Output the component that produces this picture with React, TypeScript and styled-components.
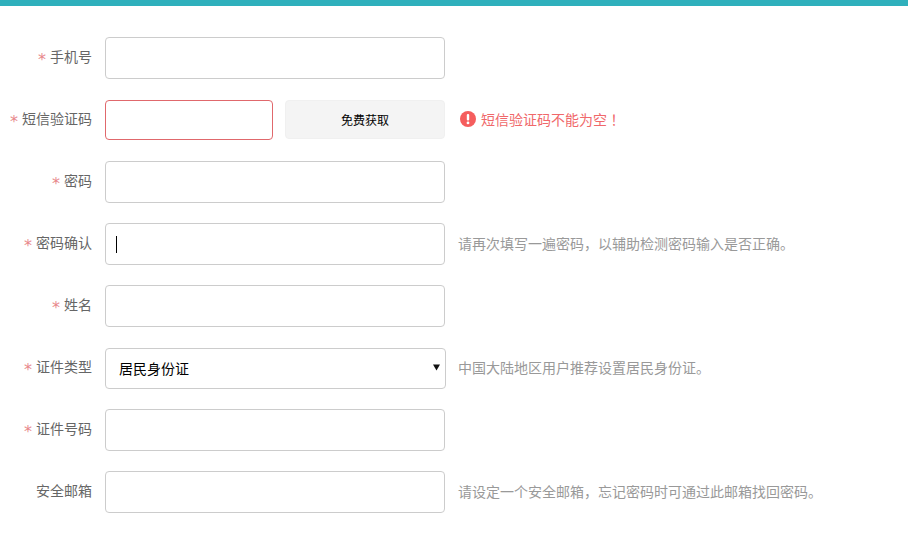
import React from 'react';
import styled, { createGlobalStyle, css } from 'styled-components';

const GlobalStyle = createGlobalStyle`
	html, body {
		margin: 0;
		padding: 0;
		background: #fff;
	}
	body {
		font-family: 'Liberation Sans', 'Noto Sans CJK SC', sans-serif;
		font-size: 14px;
		overflow: hidden;
	}
	* {
		box-sizing: border-box;
	}
`;

const TopBar = styled.div`
	height: 6px;
	background-color: #2fb0bc;
`;

const Form = styled.form`
	display: flex;
	flex-direction: column;
	gap: 20px;
	padding-top: 31px;
`;

const Row = styled.div`
	display: flex;
	align-items: center;
	height: 42px;
`;

const Label = styled.label`
	width: 92px;
	flex-shrink: 0;
	margin-right: 13px;
	margin-top: -3px;
	text-align: right;
	color: #666;
	line-height: 20px;
	white-space: nowrap;
`;

const Star = styled.span`
	font-family: 'DejaVu Sans', sans-serif;
	font-size: 16px;
	line-height: 0;
	color: #e8888b;
	margin-right: 4px;
	vertical-align: -3px;
`;

const Control = styled.div<{ $width?: number }>`
	position: relative;
	flex-shrink: 0;
	width: ${(props) => props.$width ?? 340}px;
`;

const fieldStyle = css`
	display: block;
	width: 100%;
	border: 1px solid #ccc;
	border-radius: 4px;
	background: #fff;
	outline: none;
	font-family: inherit;
`;

const TextInput = styled.input<{ $error?: boolean }>`
	${fieldStyle}
	height: ${(props) => (props.$error ? 40 : 42)}px;
	border-color: ${(props) => (props.$error ? '#e0686c' : '#ccc')};
`;

const SelectBox = styled.select`
	${fieldStyle}
	appearance: none;
	width: 341px;
	height: 41px;
	margin-top: 1px;
	padding: 0 13px 0;
	font-size: 14px;
	color: #000;
`;

const SelectArrow = styled.svg`
	position: absolute;
	top: 17px;
	right: 5px;
	width: 7px;
	height: 7px;
	pointer-events: none;
`;

const Caret = styled.span`
	position: absolute;
	left: 11px;
	top: 13px;
	width: 1px;
	height: 17px;
	background: #000;
`;

const CodeButton = styled.button`
	width: 160px;
	height: 39px;
	margin-left: 12px;
	margin-top: -1px;
	flex-shrink: 0;
	border: 1px solid #f0f0f0;
	border-radius: 4px;
	background: #f4f4f4;
	color: #000;
	font-family: inherit;
	font-size: 12px;
`;

const Hint = styled.span`
	margin-left: 13px;
	margin-top: -3px;
	color: #999;
	white-space: nowrap;
`;

const ErrorText = styled.span`
	display: flex;
	align-items: center;
	gap: 5px;
	margin-left: 15px;
	margin-top: -2px;
	color: #f0686a;
	white-space: nowrap;
`;

const Bang = styled.span`
	font-family: 'Noto Sans CJK TC', sans-serif;
`;

const ErrorIcon = () => (
	<svg width="16" height="16" viewBox="0 0 16 16">
		<circle cx="8" cy="8" r="8" fill="#f55d5d" />
		<rect x="6.8" y="3" width="2.4" height="6.6" rx="1" fill="#fff" />
		<circle cx="8" cy="11.9" r="1.4" fill="#fff" />
	</svg>
);

const App = () => {
	return (
		<>
			<GlobalStyle />
			<TopBar />
			<Form>
				<Row>
					<Label><Star>*</Star>手机号</Label>
					<Control><TextInput /></Control>
				</Row>
				<Row>
					<Label><Star>*</Star>短信验证码</Label>
					<Control $width={168}><TextInput $error /></Control>
					<CodeButton type="button">免费获取</CodeButton>
					<ErrorText>
						<ErrorIcon />
						<span>短信验证码不能为空<Bang>！</Bang></span>
					</ErrorText>
				</Row>
				<Row>
					<Label><Star>*</Star>密码</Label>
					<Control><TextInput type="password" /></Control>
				</Row>
				<Row>
					<Label><Star>*</Star>密码确认</Label>
					<Control>
						<TextInput type="password" />
						<Caret />
					</Control>
					<Hint>请再次填写一遍密码，以辅助检测密码输入是否正确。</Hint>
				</Row>
				<Row>
					<Label><Star>*</Star>姓名</Label>
					<Control><TextInput /></Control>
				</Row>
				<Row>
					<Label><Star>*</Star>证件类型</Label>
					<Control>
						<SelectBox defaultValue="id">
							<option value="id">居民身份证</option>
						</SelectBox>
						<SelectArrow viewBox="0 0 7 7">
							<path d="M0 0.5h7L3.5 6.5z" fill="#111" />
						</SelectArrow>
					</Control>
					<Hint>中国大陆地区用户推荐设置居民身份证。</Hint>
				</Row>
				<Row>
					<Label><Star>*</Star>证件号码</Label>
					<Control><TextInput /></Control>
				</Row>
				<Row>
					<Label>安全邮箱</Label>
					<Control><TextInput /></Control>
					<Hint>请设定一个安全邮箱，忘记密码时可通过此邮箱找回密码。</Hint>
				</Row>
			</Form>
		</>
	);
};

export default App;
